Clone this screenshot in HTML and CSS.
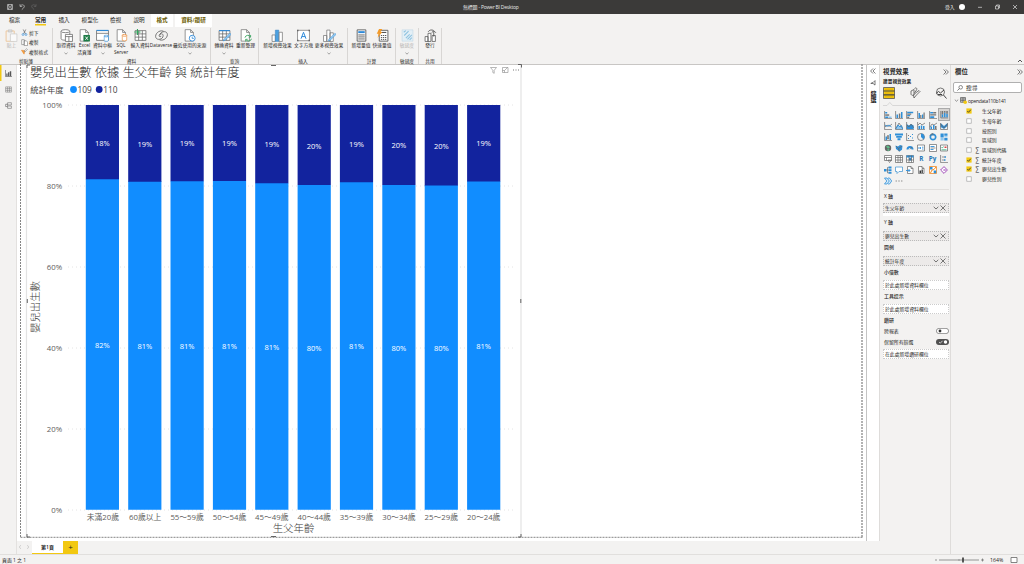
FILE: index.html
```html
<!DOCTYPE html>
<html lang="zh-Hant">
<head>
<meta charset="utf-8">
<title>無標題 - Power BI Desktop</title>
<link rel="stylesheet" href="styles.css">
</head>
<body>
<svg class="defs" width="0" height="0" aria-hidden="true">
  <symbol id="doc" viewBox="0 0 12 12"><path d="M2 .6h5l2.600 2.600v8H2zM7 .6v2.600h2.600" fill="#fff" stroke="#777" stroke-width=".7"/></symbol>
  <symbol id="grid" viewBox="0 0 12 12"><path d="M1 1.500h10v9H1zM1 4.500h10M1 7.500h10M4.300 1.500v9M7.700 1.500v9" fill="#fff" stroke="#666" stroke-width=".7"/></symbol>
  <symbol id="db" viewBox="0 0 6 8"><path d="M.5 1.500v5c0 1.300 5 1.300 5 0v-5" fill="#fff" stroke="currentColor" stroke-width=".8"/><ellipse cx="3" cy="1.500" rx="2.500" ry="1" fill="#fff" stroke="currentColor" stroke-width=".8"/></symbol>
  <symbol id="chev" viewBox="0 0 6 4"><path d="M.7.8 3 3 5.300.8" fill="none" stroke="currentColor" stroke-width=".8"/></symbol>
  <symbol id="x" viewBox="0 0 6 6"><path d="M.5.500l5 5M5.500.500l-5 5" fill="none" stroke="currentColor" stroke-width=".7"/></symbol>
  <symbol id="dbl" viewBox="0 0 6 6"><path d="M.6.500 3 3 .6 5.500M3 .5 5.400 3 3 5.500" fill="none" stroke="currentColor" stroke-width=".7"/></symbol>
  <symbol id="tick" viewBox="0 0 6 6"><path d="M.4.400h5.200v5.200H.4z" fill="#f2c811"/><path d="M1.300 3l1.200 1.300L4.800 1.700" fill="none" stroke="#333" stroke-width=".8"/></symbol>
  <symbol id="box" viewBox="0 0 6 6"><path d="M.7.700h4.600v4.600H.7z" fill="#fff" stroke="#999" stroke-width=".6"/></symbol>
</svg>

<header class="titlebar">
  <svg class="quick" viewBox="0 0 40 14"><g fill="none" stroke="#c8c8c8" stroke-width=".7"><path d="M7.500 4.500h5v5h-5zM8.500 4.500v1.800h3V4.500M8.500 9.500V7.800h3v1.700"/><path d="M20 4.200v2.200h2.200M20.200 6.200c2-2.700 4.800-1 4 .8-.4 1-1.500 1.800-2.400 2.600"/><path d="M36 4.200v2.200h-2.200M35.800 6.200c-2-2.700-4.800-1-4 .8.400 1 1.500 1.800 2.400 2.600" stroke="#666"/></g></svg>
  <span class="apptitle">無標題 - Power BI Desktop</span>
  <div class="account"><span>登入</span><i></i></div>
  <svg class="winbtns" viewBox="0 0 46 14"><g fill="none" stroke="#ddd" stroke-width=".7"><path d="M0 7.300h4M17.500 6h3v3h-3zM18.500 6V5h3v3h-1M35 5l4 4M39 5l-4 4"/></g></svg>
</header>

<nav class="tabs">
  <a>檔案</a><a class="on">常用</a><a>插入</a><a>模型化</a><a>檢視</a><a>說明</a><a class="ctx">格式</a><i></i><a class="ctx">資料/鑽研</a>
</nav>

<section class="ribbon">
  <div class="group clip">
    <div class="row">
      <div class="btn dim"><svg viewBox="0 0 12 12"><path d="M1 1.800h7.500v9.500H1z" fill="none" stroke="#ecc79c" stroke-width=".9"/><path d="M3 .8h3.500v2H3z" fill="#ddd" stroke="#bbb" stroke-width=".5"/><path d="M5 4.500h6v7H5z" fill="#fafafa" stroke="#ccc" stroke-width=".7"/></svg><span>貼上</span></div>
      <ul class="minis">
        <li><svg viewBox="0 0 8 8"><path d="M2.500.500l2.600 5M5.500.500L3 5.500" stroke="#555" stroke-width=".7"/><circle cx="2.300" cy="6.300" r="1.100" fill="none" stroke="#2b88d8" stroke-width=".7"/><circle cx="5.700" cy="6.300" r="1.100" fill="none" stroke="#2b88d8" stroke-width=".7"/></svg>剪下</li>
        <li><svg viewBox="0 0 8 8"><path d="M.8.800h3v5.600h-3zM3.500 2h2.500l1.500 1.500v4h-4z" fill="#fff" stroke="#666" stroke-width=".6"/></svg>複製</li>
        <li><svg viewBox="0 0 8 8"><path d="M.5 2.500l4 .5-1 4z" fill="#f7a13d" stroke="#e8852e" stroke-width=".6"/><path d="M3.500 3.500l3-2.700.8.800-2.800 3z" fill="#fff" stroke="#555" stroke-width=".5"/></svg>複製格式</li>
      </ul>
    </div>
    <small>剪貼簿</small>
  </div>
  <div class="group data">
    <div class="row">
      <div class="btn"><svg viewBox="0 0 12 12"><path d="M1 2v7c0 1.800 8 1.800 8 0V2" fill="#fff" stroke="#666" stroke-width=".7"/><ellipse cx="5" cy="2" rx="4" ry="1.400" fill="#fff" stroke="#666" stroke-width=".7"/><path d="M5 5h6.500v6.500H5zM5 7h6.500M8.200 7v4.500" fill="#fff" stroke="#666" stroke-width=".7"/></svg><span>取得資料</span><svg class="chev"><use href="#chev"/></svg></div>
      <div class="btn"><svg viewBox="0 0 12 12"><use href="#doc"/><path d="M5 5.500h6v6H5z" fill="#1e7b47"/><path d="M6.800 7l2.400 3M9.200 7l-2.400 3" stroke="#fff" stroke-width=".8"/></svg><span>Excel<br>活頁簿</span></div>
      <div class="btn"><svg viewBox="0 0 12 12"><path d="M.5 1.500h11v9H.5zM.5 4h11" fill="#fff" stroke="#666" stroke-width=".7"/><path d="M.5 1.300h11" stroke="#2b88d8" stroke-width="1"/><use href="#db" x="7" y="5" width="5" height="7" color="#2b88d8"/></svg><span>資料中樞</span><svg class="chev"><use href="#chev"/></svg></div>
      <div class="btn"><svg viewBox="0 0 12 12"><use href="#doc"/><use href="#db" x="6" y="4.500" width="5.500" height="7" color="#e8852e"/></svg><span>SQL<br>Server</span></div>
      <div class="btn"><svg viewBox="0 0 12 12"><use href="#grid"/><path d="M3.200 0v5.500M.5 2.800h5.500" stroke="#35a35d" stroke-width="1"/></svg><span>輸入資料</span></div>
      <div class="btn"><svg viewBox="0 0 12 12"><g fill="none" stroke="#666" stroke-width=".8"><path d="M7.800 2C3.500.500-.5 5 .8 8c1.200 2.800 6.700 1.600 6.700-1.800C7.500 3.500 4 4 3.800 6.200c0 1.200 1.600 1.200 2 .2M4.200 10c4.300 1.500 8.300-3 7-6-1.200-2.800-6.700-1.600-6.700 1.800"/></g></svg><span>Dataverse</span></div>
      <div class="btn"><svg viewBox="0 0 12 12"><use href="#doc"/><circle cx="8.500" cy="8.500" r="2.700" fill="#fff" stroke="#2b88d8" stroke-width=".8"/><path d="M8.500 7v1.700H10" fill="none" stroke="#2b88d8" stroke-width=".7"/></svg><span>最近使用的來源</span><svg class="chev"><use href="#chev"/></svg></div>
    </div>
    <small>資料</small>
  </div>
  <div class="group query">
    <div class="row">
      <div class="btn"><svg viewBox="0 0 12 12"><use href="#grid"/><path d="M1 1.500h10" stroke="#2b88d8" stroke-width="1"/><path d="M5.500 9.500L11 4l1 1-5.500 5.500-1.500.5z" fill="#9fd0f2" stroke="#2b88d8" stroke-width=".5"/></svg><span>轉換資料</span><svg class="chev"><use href="#chev"/></svg></div>
      <div class="btn"><svg viewBox="0 0 12 12"><use href="#doc"/><path d="M5.500 8a2.700 2.700 0 0 1 5-.8M11.500 9a2.700 2.700 0 0 1-5 .8M10.700 5.500v2H9M6.200 11.500v-2H8" fill="none" stroke="#35a35d" stroke-width=".8"/></svg><span>重新整理</span></div>
    </div>
    <small>查詢</small>
  </div>
  <div class="group insert">
    <div class="row">
      <div class="btn"><svg viewBox="0 0 12 12"><path d="M1 5.500h3v6H1z" fill="#fff" stroke="#666" stroke-width=".6"/><path d="M4 1h3.200v10.500H4z" fill="#4ba0e0" stroke="#2b78b8" stroke-width=".4"/><path d="M7.500 3h3v8.500h-3z" fill="#fff" stroke="#666" stroke-width=".6"/></svg><span>新增視覺效果</span></div>
      <div class="btn"><svg viewBox="0 0 12 12"><path d="M.5 1.200h11v9.600H.5z" fill="#fff" stroke="#666" stroke-width=".6"/><path d="M3.700 9L6 3l2.300 6M4.500 7h3" fill="none" stroke="#2b88d8" stroke-width=".9"/><path d="M0 .6h1.400V2H0zM10.600.600H12V2h-1.400zM0 10h1.400v1.400H0zM10.600 10H12v1.400h-1.400z" fill="#666"/></svg><span>文字方塊</span></div>
      <div class="btn"><svg viewBox="0 0 12 12"><path d="M.5 6h3v5.500h-3zM3.500 1h3v10.500h-3zM6.500 3.500h3v8h-3z" fill="#fff" stroke="#666" stroke-width=".6"/><path d="M5.500 9.500L11 4l1 1-5.500 5.500-1.500.5z" fill="#9fd0f2" stroke="#2b88d8" stroke-width=".5"/></svg><span>更多視覺效果</span><svg class="chev"><use href="#chev"/></svg></div>
    </div>
    <small>插入</small>
  </div>
  <div class="group calc">
    <div class="row">
      <div class="btn"><svg viewBox="0 0 12 12"><path d="M2 .8h8v10.400H2z" fill="#fff" stroke="#555" stroke-width=".8"/><path d="M3 2h6v1.800H3z" fill="#2b88d8"/><path d="M3 5.500h6M3 7.300h6M3 9.200h6" stroke="#555" stroke-width=".8"/></svg><span>新增量值</span></div>
      <div class="btn"><svg viewBox="0 0 12 12"><path d="M3 1.200h8v10H3z" fill="#fff" stroke="#555" stroke-width=".8"/><path d="M4.500 3.200h5" stroke="#555"/><path d="M4.500 6h5M4.500 7.900h5M4.500 9.600h5" stroke="#555" stroke-width=".9" stroke-dasharray="1.200 .7"/><path d="M2.800 0h3L4.200 2.700h1.600L1.500 8l.9-3.700H.7z" fill="#f49a28"/></svg><span>快速量值</span></div>
    </div>
    <small>計算</small>
  </div>
  <div class="group single">
    <div class="row">
      <div class="btn dim"><svg viewBox="0 0 12 12"><path d="M1 .8h10v10.400H1z" fill="#e3eff6" stroke="#c3d9e6" stroke-width=".6"/><path d="M2.500 3l2-1.500M3 6l4-4M4.500 8.500L8 5M6 9.500l4-4M8 10l2-2" stroke="#8fc3e0" stroke-width="1"/></svg><span>敏感度</span><svg class="chev"><use href="#chev"/></svg></div>
    </div>
    <small>敏感度</small>
  </div>
  <div class="group single">
    <div class="row">
      <div class="btn"><svg viewBox="0 0 12 12"><path d="M1 7h2.700v4.500H1zM3.700 4h2.700v7.500H3.700zM7.500 6h3v5.500h-3z" fill="#fff" stroke="#555" stroke-width=".7"/><path d="M3.800 2.600C5 .8 7 .6 8.500 1.200M9 7V1.800M7 3.500l2-2 2 2" fill="none" stroke="#555" stroke-width=".8"/></svg><span>發行</span></div>
    </div>
    <small>共用</small>
  </div>
  <svg class="collapse" viewBox="0 0 6 4"><path d="M1 3l2-2 2 2" fill="none" stroke="#444" stroke-width=".9"/></svg>
</section>

<main class="workspace">
  <aside class="rail">
    <div class="on"><svg viewBox="0 0 8 8"><path d="M.5 0v7.500H8" fill="none" stroke="#555" stroke-width=".7"/><path d="M1.500 4h1.400v3H1.500zM3.500 2.500h1.400V7H3.500zM5.500 1.300h1.600V7H5.500z" fill="#555"/></svg></div>
    <div><svg viewBox="0 0 8 8"><path d="M.7 1h6.600v6H.7zM.7 3h6.600M.7 5h6.600M2.900 1v6M5.100 1v6" fill="none" stroke="#777" stroke-width=".6"/></svg></div>
    <div><svg viewBox="0 0 8 8"><path d="M3 .8h4.300v2.600H3zM3 4.600h4.300v2.700H3zM.6 2.600h2.200v2.600H.6zM2.800 2l-1 .6M2.800 6l-1-.8" fill="none" stroke="#777" stroke-width=".7"/></svg></div>
  </aside>

  <div class="center">
    <div class="canvas">
      <svg class="chart" viewBox="17 64 849 477">
        <g fill="none" stroke="#666" stroke-width=".8" stroke-dasharray="2 1"><path d="M20.500 64v473.500M20.500 537.300h842"/></g>
        <path d="M862 64v473.500" fill="none" stroke="#999" stroke-width="1.500" stroke-dasharray="2 1"/>
        <path d="M26.500 64v473M521 64v473" stroke="#e3e3e3" stroke-width="1.200"/>
        <g fill="none" stroke="#555" stroke-width=".9"><path d="M27 68v-3h3M518 64.500h3.500v3M27 534v3h3M521 534v3h-3M27.300 299v4M520.800 299v4M271 65.500h5M271 536.500h5"/></g>
        <path d="M68 105h447M68 186h447M68 267h447M68 348h447M68 429h447M68 510h447" stroke="#ddd" stroke-width=".8" stroke-dasharray="1 3"/>
        <text class="ct" x="30" y="76.500">嬰兒出生數 依據 生父年齡 與 統計年度</text>
        <text class="leg" x="30.300" y="92.600">統計年度</text>
        <circle cx="73.500" cy="89.500" r="3.400" fill="#118dff"/><text class="leg" x="77.500" y="92.600">109</text>
        <circle cx="99.200" cy="89.500" r="3.400" fill="#12239e"/><text class="leg" x="103.200" y="92.600">110</text>
        <g fill="none" stroke="#888" stroke-width=".6"><path d="M490.500 67.500h6l-2.300 2.800v3l-1.400-.8v-2.200zM502.500 67.500h5.500v5h-5.500zM504.500 70.500l3-3M502.500 70.500h2v2"/></g>
        <path d="M513 70h1M515.500 70h1M518 70h1" stroke="#777"/>
        <g class="ylab"><text x="62.200" y="107.800">100%</text><text x="62.200" y="188.800">80%</text><text x="62.200" y="269.800">60%</text><text x="62.200" y="350.800">40%</text><text x="62.200" y="431.800">20%</text><text x="62.200" y="512.800">0%</text></g>
        <path fill="#118dff" d="M85.800 179h33.200v330.700h-33.200zM128.200 181h33.200v328.700h-33.200zM170.500 181h33.200v328.700h-33.200zM212.900 181h33.200v328.700h-33.200zM255.200 183h33.200v326.700h-33.200zM297.600 185h33.200v324.700h-33.200zM339.900 182h33.200v327.700h-33.200zM382.300 185h33.200v324.700h-33.200zM424.700 185h33.200v324.700h-33.200zM467.100 181h33.200v328.700h-33.200z"/>
        <path fill="#12239e" d="M85.800 105h33.200v74.300h-33.200zM128.200 105h33.200v76.800h-33.200zM170.500 105h33.200v76.300h-33.200zM212.900 105h33.200v76h-33.200zM255.200 105h33.200v78.300h-33.200zM297.600 105h33.200v80h-33.200zM339.900 105h33.200v77.200h-33.200zM382.300 105h33.200v79.900h-33.200zM424.700 105h33.200v80.600h-33.200zM467.100 105h33.200v76.500h-33.200z"/>
        <g class="val"><text x="102.400" y="145.500">18%</text><text x="144.800" y="146.500">19%</text><text x="187.100" y="146.300">19%</text><text x="229.500" y="146.300">19%</text><text x="271.800" y="147.300">19%</text><text x="314.200" y="148.500">20%</text><text x="356.500" y="146.600">19%</text><text x="398.900" y="148.300">20%</text><text x="441.300" y="148.500">20%</text><text x="483.700" y="146.300">19%</text>
        <text x="102.400" y="347.800">82%</text><text x="144.800" y="349">81%</text><text x="187.100" y="348.800">81%</text><text x="229.500" y="348.700">81%</text><text x="271.800" y="350">81%</text><text x="314.200" y="350.800">80%</text><text x="356.500" y="349.400">81%</text><text x="398.900" y="350.800">80%</text><text x="441.300" y="351">80%</text><text x="483.700" y="348.900">81%</text></g>
        <g class="xlab"><text x="102.800" y="520">未滿20歲</text><text x="145.200" y="520">60歲以上</text><text x="187.100" y="520">55～59歲</text><text x="229.500" y="520">50～54歲</text><text x="271.800" y="520">45～49歲</text><text x="314.200" y="520">40～44歲</text><text x="356.500" y="520">35～39歲</text><text x="398.900" y="520">30～34歲</text><text x="441.300" y="520">25～29歲</text><text x="483.700" y="520">20～24歲</text></g>
        <text class="axis" x="293.500" y="531.500">生父年齡</text>
        <text class="axis" transform="translate(38.800 307) rotate(-90)">嬰兒出生數</text>
      </svg>
      <div class="filters">
        <svg viewBox="0 0 6 6"><use href="#dbl" transform="rotate(180 3 3)"/></svg>
        <svg viewBox="0 0 6 6"><path d="M5 .6v4.500L3 3.400H.8l2.200-.8z" fill="none" stroke="#444" stroke-width=".7"/></svg>
        <span>篩選</span>
      </div>
    </div>
    <div class="pages"><svg class="pg" viewBox="0 0 16 12"><path d="M4 4L2.500 6 4 8M11 4l1.500 2L11 8" fill="none" stroke="#bbb" stroke-width=".7"/></svg><div class="page">第1頁</div><div class="add">+</div></div>
  </div>

  <aside class="viz">
    <div class="phead"><b>視覺效果</b><svg><use href="#dbl"/></svg></div>
    <div class="sub">建置視覺效果</div>
    <div class="modes">
      <svg viewBox="0 0 12 12"><path d="M.5.500h11v11H.5z" fill="#f2c811" stroke="#555" stroke-width=".8"/><path d="M.5 4h11M.5 7.800h11" stroke="#444" stroke-width="1.200"/><path d="M2 2.300h8M2 6h8M2 9.800h8" stroke="#d7a300" stroke-width=".6"/></svg>
      <svg viewBox="0 0 12 12"><path d="M2 4l3-1.500v5c0 1.500-3 1-3-.5zM5.500 1.500C7 0 8.500 1.500 7.500 3L5.500 6M6.500 6l3.500-2.500 1 1L7.500 8 5 11 4.500 8z" fill="none" stroke="#555" stroke-width=".8"/></svg>
      <svg viewBox="0 0 12 12"><circle cx="5.500" cy="5" r="4" fill="none" stroke="#555" stroke-width=".8"/><path d="M8.500 8l3 3.500M1 6.500l2.500-2 2 1.500L9 3M3 7.500h4" fill="none" stroke="#444" stroke-width="1"/></svg>
    </div>
    <svg class="notch" viewBox="0 0 71 5"><path d="M3 3.500h4l2.800-3 2.800 3H70" fill="none" stroke="#ccc" stroke-width=".7"/></svg>
    <div class="gallery">
      <svg viewBox="0 0 8 8"><path d="M.6 0v7.600H8" class="l"/><path d="M1.200 1h2v1.500h-2zM1.200 5.500h3V7h-3z" class="b"/><path d="M1.200 3.300h4v1.500h-4z" class="g"/><path d="M4.500 5.500h3V7h-3z" class="c"/></svg>
      <svg viewBox="0 0 8 8"><path d="M.6 0v7.600H8" class="l"/><path d="M1.500 3.500H3V7H1.500zM6 1h1.500v6H6z" class="b"/><path d="M3.800 2.500h1.500V7H3.800z" class="g"/></svg>
      <svg viewBox="0 0 8 8"><path d="M.6 0v7.600H8" class="l"/><path d="M1.200.800h6v1.500h-6zM1.200 4h3v1.300h-3z" class="b"/><path d="M1.200 2.500h4v1.200h-4zM1.200 5.700h2V7h-2z" class="g"/></svg>
      <svg viewBox="0 0 8 8"><path d="M.6 0v7.600H8" class="l"/><path d="M1.500 2H3v5H1.500zM5 3.500h1.300V7H5z" class="b"/><path d="M3.200 4h1.200v3H3.200zM6.500 1.500h1.200V7H6.500z" class="g"/></svg>
      <svg viewBox="0 0 8 8"><path d="M.6 0v7.600H8" class="l"/><path d="M1.200 1h3v1.500h-3zM1.200 5.300h4V7h-4z" class="b"/><path d="M4.200 1h3v1.500h-3zM1.200 3.200h6v1.400h-6z" class="g"/></svg>
      <svg class="sel" viewBox="0 0 8 8"><path d="M.6 0v7.600H8" class="l"/><path d="M1.500 4H3v3H1.500zM3.800 2.500h1.400V7H3.800zM6 3.500h1.500V7H6z" class="b"/><path d="M1.500.800H3V4H1.500zM3.800.800h1.400v1.700H3.800zM6 .8h1.500v2.700H6z" class="g"/></svg>

      <svg viewBox="0 0 8 8"><path d="M.6 0v7.600H8M1 5l2-2 2 1.500L8 2" class="l"/><path d="M1 3l2 1.500L5 3l2.500 2" class="s"/></svg>
      <svg viewBox="0 0 8 8"><path d="M.6 7.500L3 2.500l2 2L6 3l2 4.500z" class="c"/><path d="M.6 0v7.600H8M.6 7L4 1l4 6" class="l"/><path d="M1 6.500l2-3.500 2 2L6.500 3.500l1.300 3.500" class="s"/></svg>
      <svg viewBox="0 0 8 8"><path d="M.6 7V2L3 3.500 5 2l2.700 1.500V7z" class="b"/><path d="M.6 0v7.600H8M1 3l2 2 2-3 3 4" class="l"/></svg>
      <svg viewBox="0 0 8 8"><path d="M.6 0v7.600H8M1 3l2-2 2 2 3-2" class="l"/><path d="M1.500 4H3v3H1.500zM3.800 3.500h1.400V7H3.800zM6 4h1.500v3H6z" class="b"/></svg>
      <svg viewBox="0 0 8 8"><path d="M.6 0v7.600H8M1 5l2-3 2 1 3-2" class="l"/><path d="M1.500 4.500H3V7H1.500zM4 3h1.500v4H4z" class="b"/><path d="M6 4h1.500v3H6z" class="g"/></svg>
      <svg viewBox="0 0 8 8"><path d="M.6 1l3.400 3 3.500-3v3L4 7 .6 5z" class="b"/><path d="M.6 1v6.500h7V1M.6 2l3.400 4 3.500-4" class="l"/></svg>

      <svg viewBox="0 0 8 8"><path d="M.6 0v7.600H8M3.500 2.500h1V6h-1z" class="l"/><path d="M1.500 3.500H3V7H1.500zM5.500 1H7v6H5.500z" class="b"/></svg>
      <svg viewBox="0 0 8 8"><path d="M0 .6h8v1.800H0zM1.200 3h5.600v1.700H1.200zM2.500 5.300h3v2h-3z" class="b"/></svg>
      <svg viewBox="0 0 8 8"><path d="M.6 0v7.600H8" class="l"/><path d="M2 5h1v1H2zM4 3h1v1H4zM6 4.500h1v1H6zM6 1h1v1H6z" class="b"/><path d="M2 2h1v1H2z" class="g"/></svg>
      <svg viewBox="0 0 8 8"><circle cx="4" cy="4" r="3.500" class="l"/><path d="M4 .5A3.500 3.500 0 0 1 6.500 6.500L4 4z" class="b"/></svg>
      <svg viewBox="0 0 8 8"><circle cx="4" cy="4" r="2.700" fill="none" stroke="#2f8fd8" stroke-width="1.700"/><path d="M4 .5A3.500 3.500 0 0 0 .8 3M4 .5v2" class="l"/></svg>
      <svg viewBox="0 0 8 8"><path d="M.5.500h3.200v4H.5zM4.300.500h3.200v2.200H4.300zM4.300 5h3.200v2.500H4.300z" class="b"/><path d="M.5 5h3.200v2.500H.5zM4.300 3.200h3.200v1.300H4.300z" class="c"/></svg>

      <svg viewBox="0 0 8 8"><circle cx="4" cy="4" r="3.200" fill="#666"/><path d="M2 2.500l2-1 2 2-2 1.200zM3 5.500l2-.5.5 1.500L4 7z" fill="#5fc08a"/></svg>
      <svg viewBox="0 0 8 8"><path d="M.5 1.500l2.500 1 2-1.500 2.500.700-.5 4L4.500 7.500 1 5z" class="b"/><path d="M1 2l2.500 2.500L7 2M3.500 4.500l.7 3" class="l"/></svg>
      <svg viewBox="0 0 8 8"><path d="M.5 5.500a3.500 3.500 0 0 1 7 0H5.500a1.500 1.500 0 0 0-3 0z" class="b"/><path d="M4 5.300l2-2.500" class="l"/></svg>
      <svg viewBox="0 0 8 8"><path d="M.5 1h7v6h-7z" class="w"/><path d="M2 3v2M3.500 3v2M5 3.200h1.500M5 5h1.500" class="s"/></svg>
      <svg viewBox="0 0 8 8"><path d="M.5.500h7v7h-7z" class="w"/><path d="M1.500 2.500h4M1.500 5.500h3" class="s"/><path d="M1.500 4h5" class="l"/></svg>
      <svg viewBox="0 0 8 8"><path d="M.5 1h7v6h-7z" class="w"/><path d="M4.500 2.500h2V4h-2z" fill="#d44"/><path d="M1.500 3.300l.8.800L3.500 2.500M1.500 5.800h5" fill="none" stroke="#3a7" stroke-width=".8"/></svg>

      <svg viewBox="0 0 8 8"><path d="M.5.500h7v5h-7zM.5 2.500h7M2.500 2.500v3M4 5l1.500 2.500L7.500 5z" class="w"/></svg>
      <svg viewBox="0 0 8 8"><path d="M.5.500h7v7h-7zM.5 2.500h7M.5 5h7M3 .5v7M5.300.500v7" class="w"/></svg>
      <svg viewBox="0 0 8 8"><path d="M.5.500h7v7h-7z" class="w"/><path d="M.5.500h7v2h-7zM3 3h2.500v2.500H3z" class="b"/><path d="M.5 5h7M3 .5v7M5.500.500v7" class="l"/></svg>
      <span class="rt">R</span>
      <span class="rt">Py</span>
      <svg viewBox="0 0 8 8"><path d="M.6 0v7.600H8M2 2h3M2 5h2.500" class="l"/><path d="M4.500 1.300h1.500v1.500H4.500zM6 3.200l1.500-2M4 4.300h1.500v1.500H4z" class="b"/></svg>

      <svg viewBox="0 0 8 8"><path d="M0 3h2.500v2.500H0zM4.500.500h3v2h-3zM4.500 3.200h3v2h-3zM4.500 6h3v1.700h-3z" class="b"/><path d="M2.500 4h2M3.500 1.500v5.300h1M3.500 1.500h1" class="l"/></svg>
      <svg viewBox="0 0 8 8"><path d="M.5 1h7v4.500H4L2 7.500v-2H.5z" fill="#fff" stroke="#3a8fd0" stroke-width=".7"/></svg>
      <svg viewBox="0 0 8 8"><path d="M1.500.500h3.500l2 2v5H1.500zM5 .5v2h2" class="w"/><path d="M0 4.500h4M2.500 3L4 4.500 2.500 6" class="s"/></svg>
      <svg viewBox="0 0 8 8"><path d="M1.500.500h3.500l2 2v5H1.500zM5 .5v2h2" class="w"/><path d="M2.500 4.500H4V7H2.500zM4.500 3.500h1.300V7H4.500z" fill="#333"/></svg>
      <svg viewBox="0 0 8 8"><path d="M.5.500h7v7h-7z" fill="#fff" stroke="#f08a24" stroke-width=".8"/><path d="M1 1h2.500v2.500H1zM4.700 4.500h2.500v2.700H4.700z" class="b"/><path d="M1.500 7l1.500-3 2-.5L7 1" stroke="#f08a24" stroke-width="1" fill="none"/></svg>
      <svg viewBox="0 0 8 8"><path d="M4 .6L7.400 4 4 7.400.6 4z" fill="#fff" stroke="#a04ab8" stroke-width="1" stroke-linejoin="round"/><path d="M3 4h2.500M4.500 3l1 1-1 1" fill="none" stroke="#a04ab8" stroke-width=".7"/></svg>

      <svg viewBox="0 0 8 8"><path d="M.5 1h2.500L5.300 4 3 7H.5l2.300-3zM4 1h1.500L7.700 4 5.500 7H4" fill="#d8ecfa" stroke="#2f8fd8" stroke-width=".8"/></svg>
      <svg viewBox="0 0 8 8"><path d="M.7 4h1M3.500 4h1M6.300 4h1" stroke="#555" stroke-width=".9"/></svg>
    </div>
    <div class="wells">
      <h4>X 軸</h4>
      <div class="pill"><span>生父年齡</span><svg class="chev"><use href="#chev"/></svg><svg><use href="#x"/></svg></div><div class="strip"></div>
      <h4 class="y">Y 軸</h4>
      <div class="pill"><span>嬰兒出生數</span><svg class="chev"><use href="#chev"/></svg><svg><use href="#x"/></svg></div>
      <h4>圖例</h4>
      <div class="pill"><span>統計年度</span><svg class="chev"><use href="#chev"/></svg><svg><use href="#x"/></svg></div>
      <h4>小倍數</h4>
      <div class="drop">於此處新增資料欄位</div>
      <h4>工具提示</h4>
      <div class="drop">於此處新增資料欄位</div>
      <h4 class="drill">鑽研</h4>
      <div class="toggle"><span>跨報表</span><svg viewBox="0 0 13 6"><rect x=".4" y=".4" width="12.200" height="5.200" rx="2.600" fill="#fff" stroke="#555" stroke-width=".6"/><circle cx="4" cy="3" r="1.400" fill="#333"/></svg></div>
      <div class="toggle"><span>保留所有篩選</span><svg viewBox="0 0 13 6"><rect width="13" height="6" rx="3" fill="#505050"/><path d="M3 3l1.300 1.200L6.500 1.800" fill="none" stroke="#fff" stroke-width=".7"/><circle cx="9.500" cy="3" r="1.700" fill="#fff"/></svg></div>
      <div class="drop last">在此處新增鑽研欄位</div>
    </div>
  </aside>

  <aside class="fields">
    <div class="phead"><b>欄位</b><svg><use href="#dbl"/></svg></div>
    <div class="search"><svg viewBox="0 0 6 6"><circle cx="3.700" cy="2.300" r="1.800" fill="none" stroke="#444" stroke-width=".6"/><path d="M2.400 3.600L.4 5.600" stroke="#444" stroke-width=".7"/></svg>搜尋</div>
    <div class="table"><svg class="chev"><use href="#chev"/></svg><svg viewBox="0 0 7 7"><path d="M.5.500h5v4.800h-5zM.5 2h5M.5 3.600h5M2.200.500v4.800M3.900.500v4.800" fill="none" stroke="#444" stroke-width=".6"/><circle cx="5.200" cy="5.200" r="1.800" fill="#f2c811"/></svg><span>opendata110b141</span></div>
    <ul>
      <li><svg><use href="#tick"/></svg><i></i>生父年齡</li>
      <li><svg><use href="#box"/></svg><i></i>生母年齡</li>
      <li><svg><use href="#box"/></svg><i></i>按照別</li>
      <li><svg><use href="#box"/></svg><i></i>區域別</li>
      <li><svg><use href="#box"/></svg><i>∑</i>區域別代碼</li>
      <li><svg><use href="#tick"/></svg><i>∑</i>統計年度</li>
      <li><svg><use href="#tick"/></svg><i>∑</i>嬰兒出生數</li>
      <li><svg><use href="#box"/></svg><i></i>嬰兒性別</li>
    </ul>
  </aside>
</main>

<footer class="status"><span>頁面 1 之 1</span>
  <svg class="slider" viewBox="0 0 52 10"><path d="M1 5h2M5 5h40M47 5h3M48.500 3.500v3" stroke="#555" stroke-width=".6"/><path d="M25 4v2" stroke="#777" stroke-width=".6"/><path d="M29 2.500v5" stroke="#333" stroke-width="1.600"/></svg>
  <span class="pct">164%</span>
  <svg class="fit" viewBox="0 0 8 8"><path d="M1 1.500h6v5H1z" fill="#fff" stroke="#666" stroke-width=".8"/></svg>
</footer>
</body>
</html>
```
FILE: styles.css
```css
* { box-sizing: border-box; margin: 0; padding: 0; }
html, body { width: 1024px; height: 564px; overflow: hidden; }
body { display: flex; flex-direction: column; background: #f3f2f1; color: #252423; font: 5px/6px "Open Sans", "Noto Sans CJK TC", sans-serif; white-space: nowrap; }
ul { list-style: none; }
i { font-style: normal; }
svg { display: block; flex: none; }
.defs { position: absolute; }

.titlebar { flex: none; height: 14px; background: #3b3a39; color: #e6e6e6; display: grid; grid-template-columns: 40px 423px 482px 33px 46px; align-items: center; }
.quick { grid-column: 1; width: 40px; height: 14px; }
.apptitle { grid-column: 3; font-size: 5px; letter-spacing: -.22px; }
.account { display: flex; align-items: center; gap: 4px; font-size: 4.800px; }
.account i { width: 6px; height: 6px; border-radius: 50%; background: #fff; }
.winbtns { width: 46px; height: 14px; }

.tabs { flex: none; height: 13px; display: grid; grid-template-columns: 29px 23px 24px 28px 23px 24px 22px 2px 37px; font-size: 5.600px; line-height: 12px; text-align: center; }
.tabs .on { font-weight: 600; background: linear-gradient(#f2c811, #f2c811) center 10px / 11px 1.500px no-repeat; }
.tabs .ctx { background: #fff; color: #6b5b00; font-weight: 600; }

.ribbon { flex: none; height: 38px; display: flex; border-bottom: 1px solid #c8c6c4; padding-top: 1px; }
.group { display: flex; flex-direction: column; justify-content: space-between; height: 36px; border-right: 1px solid #d8d6d4; }
.group small { font-size: 4.700px; line-height: 6px; text-align: center; }
.group .row { display: grid; height: 29px; }
.clip { width: 53px; }
.clip .row { grid-template-columns: 19px 1fr; padding-left: 2px; }
.data { width: 158px; }
.data .row { grid-template-columns: 18px 19px 17px 20px 18px 24px 33px; padding-left: 4px; }
.query { width: 48px; }
.query .row { grid-template-columns: 20px 23px; padding-left: 3px; }
.insert { width: 89px; }
.insert .row { grid-template-columns: 29px 23px 28px; padding-left: 4px; }
.calc { width: 48px; }
.calc .row { grid-template-columns: 22px 20px; padding-left: 2px; }
.single { width: 23px; }
.single .row { grid-template-columns: 22px; }
.btn { display: flex; flex-direction: column; align-items: center; min-width: 0; padding-top: 1px; font-size: 4.750px; line-height: 7px; text-align: center; }
.btn > svg { width: 13px; height: 13px; }
svg.chev { width: 5px; height: 3px; color: #555; }
.btn > svg.chev { width: 4px; height: 3px; margin-top: 3px; }
.dim { color: #b5b3b1; }
.minis li { display: flex; align-items: center; gap: 1px; height: 9.500px; font-size: 4.750px; }
.minis svg { width: 7px; height: 7px; }
.collapse { width: 6px; height: 4px; margin: 31px 1px 0 auto; }

.workspace { flex: none; height: 489px; display: flex; }
.rail { width: 17px; border-right: 1px solid #e3e1df; }
.rail div { height: 16px; display: flex; align-items: center; padding-left: 5px; }
.rail .on { background: linear-gradient(#f2c811, #f2c811) left / 1.500px 100% no-repeat; }
.rail svg { width: 7px; height: 7px; }

.center { width: 863px; }
.canvas { display: flex; height: 476px; background: #fff; }
.chart { width: 849px; height: 477px; margin-top: -1px; }
.chart text { fill: #605e5c; font-family: "Open Sans", "Noto Sans CJK TC", sans-serif; font-size: 7.800px; }
.chart .ct { fill: #252423; font-size: 12.300px; }
.chart .leg { font-size: 8.300px; fill: #454341; }
.chart .ylab text { text-anchor: end; }
.chart .val text { text-anchor: middle; fill: #fff; font-size: 7.500px; }
.chart .xlab text { text-anchor: middle; }
.chart .axis { text-anchor: middle; font-size: 10.400px; fill: #3b3a39; font-weight: 300; }
.chart .ct { font-weight: 300; }
.filters { width: 14px; border-left: 1px solid #c4c4c4; border-right: 1px solid #dedcda; display: flex; flex-direction: column; align-items: center; gap: 6px; padding-top: 3px; font-weight: 600; font-size: 6px; line-height: 6px; }
.filters svg { width: 6px; height: 6px; color: #444; }
.filters span { writing-mode: vertical-rl; margin-top: -1px; }
.pages { display: flex; height: 13px; }
.pg { width: 15px; height: 12px; }
.page { width: 31px; height: 13px; background: linear-gradient(#f2c811, #f2c811) bottom / 100% 1.500px no-repeat #fff; text-align: center; line-height: 13px; font-size: 5px; font-weight: 600; }
.add { width: 15px; background: #f2c811; text-align: center; font-size: 8px; line-height: 12px; }

.viz { width: 71px; border-right: 1px solid #dedcda; }
.phead { display: flex; align-items: center; justify-content: space-between; height: 13px; padding: 0 1px 0 3px; font-size: 6.400px; }
.phead b { font-weight: 600; }
.phead svg { width: 6px; height: 6px; color: #444; }
.viz .sub { padding-left: 3px; height: 9px; font-size: 4.700px; line-height: 7px; font-weight: 600; }
.modes { display: flex; justify-content: space-between; padding: 0 3px; height: 15px; }
.modes svg { width: 12px; height: 12px; }
.notch { width: 71px; height: 5px; }
.gallery { display: grid; grid-template-columns: repeat(6, 11.250px); grid-auto-rows: 11.150px; place-items: center; padding: 2px 0 0 2px; height: 82px; }
.gallery svg { width: 8px; height: 8px; }
.gallery .sel { width: 10.500px; height: 10.500px; padding: 1.200px; background: #d6d4d2; outline: .5px solid #aaa; }
.rt { color: #2677b8; font-weight: 700; font-size: 6.300px; }
.l { fill: none; stroke: #666; stroke-width: .7; }
.s { fill: none; stroke: #2f8fd8; stroke-width: .9; }
.w { fill: #fff; stroke: #666; stroke-width: .7; }
.b { fill: #2f8fd8; }
.g { fill: #777; }
.c { fill: #8fc6ee; }

.wells { border-top: 1px solid #e1dfdd; margin: 0 1px 0 3px; }
.wells h4 { height: 14.300px; line-height: 13.500px; font-size: 4.900px; font-weight: 500; padding-left: 1px; }
.wells h4:first-child { height: 13.300px; }
.wells .y { height: 14.600px; }
.pill { height: 10.200px; background: #eceae9; border: .5px dotted #bbb; display: flex; align-items: center; gap: 1px; padding: 0 2px 0 1px; font-size: 4.800px; }
.pill span { flex: 1; }
.pill svg.chev { width: 6px; height: 4px; }
.pill svg:last-child { width: 6px; height: 6px; color: #444; }
.strip { height: 3px; background: #fff; }
.drop { height: 9.800px; background: #fff; border: .5px dotted #ccc; line-height: 8px; padding-left: 1px; font-size: 4.850px; }
.wells .drill { height: 12px; }
.toggle { display: flex; align-items: center; justify-content: space-between; height: 10.500px; padding-left: 1px; font-size: 4.900px; }
.toggle svg { width: 13px; height: 6px; }
.last { margin-top: 2px; }

.fields { width: 73px; }
.fields .phead { padding-left: 4px; }
.search { height: 11px; margin: 4px 2px 0; background: #fff; border: 1px solid #b0b0b0; border-radius: 2px; display: flex; align-items: center; gap: 3px; padding-left: 3px; font-size: 5.800px; }
.search svg { width: 6px; height: 6px; }
.table { display: flex; align-items: center; gap: 1px; height: 13.500px; padding: 2px 0 0 3px; font-size: 5px; letter-spacing: -.3px; }
.table svg:nth-child(2) { width: 7px; height: 7px; }
.fields li { display: grid; grid-template-columns: 7px 9px 1fr; height: 9.650px; align-items: center; padding-left: 15px; font-size: 4.900px; }
.fields li svg { width: 6px; height: 6px; }
.fields li i { text-align: center; font-size: 6px; }

.status { flex: none; height: 10px; display: flex; align-items: center; border-top: 1px solid #e1dfdd; padding-left: 2px; font-size: 4.900px; }
.slider { width: 52px; height: 10px; margin-left: auto; }
.pct { width: 15px; margin-left: 4px; font-size: 5.200px; }
.fit { width: 8px; height: 8px; margin: 0 6px 0 5px; }
```
